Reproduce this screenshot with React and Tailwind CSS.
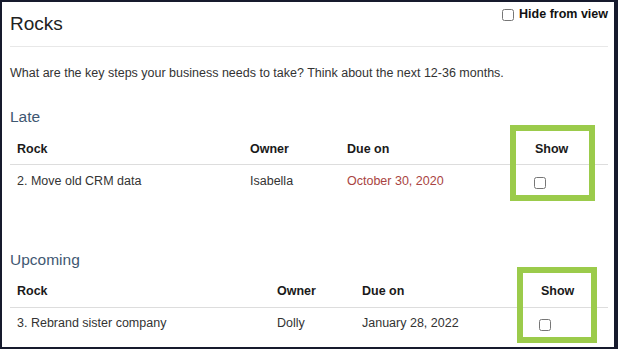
import React from "react";

const lateRocks = [
  { name: "2. Move old CRM data", owner: "Isabella", due: "October 30, 2020" },
];

const upcomingRocks = [
  { name: "3. Rebrand sister company", owner: "Dolly", due: "January 28, 2022" },
];

const App = () => {
  return (
    <div
      className="relative w-[618px] h-[349px] bg-white border-l-2 border-t-2 border-b-2 border-r-4 border-[#161a2d] text-[#333] overflow-hidden"
      style={{ fontFamily: '"Liberation Sans", Arial, sans-serif' }}
    >
      <div className="pl-[8px] pr-[6px]">
        {/* heading */}
        <div className="flex justify-between items-start pb-[11px] border-b border-[#e8e8e8]">
          <div className="mt-[11px] text-[19px] leading-[22px] text-[#222]">Rocks</div>
          <label className="mt-[5px] flex items-center gap-[5px] text-[12.5px] leading-[15px] font-bold text-[#111]">
            <input type="checkbox" className="w-[12px] h-[12px]" />
            Hide from view
          </label>
        </div>

        <div className="mt-[18px] text-[12.5px] leading-[16px]">
          What are the key steps your business needs to take? Think about the next 12-36 months.
        </div>

        {/* Late */}
        <div className="mt-[26px] text-[15.5px] leading-[20px] text-[#3f5872]">Late</div>
        <div className="grid grid-cols-[233px_97px_187px_81px] text-[12.5px] leading-[16px]">
          <div className="pl-[7px] pt-[14px] pb-[7px] font-bold text-[#1a1a1a] border-b border-[#dddddd]">Rock</div>
          <div className="pl-[7px] pt-[14px] pb-[7px] font-bold text-[#1a1a1a] border-b border-[#dddddd]">Owner</div>
          <div className="pl-[7px] pt-[14px] pb-[7px] font-bold text-[#1a1a1a] border-b border-[#dddddd]">Due on</div>
          <div className="pl-[8px] pt-[14px] pb-[7px] font-bold text-[#1a1a1a] border-b border-[#dddddd]">Show</div>
          {lateRocks.map((rock, index) => (
            <React.Fragment key={index}>
              <div className="pl-[7px] pt-[8px] pb-[8px]">{rock.name}</div>
              <div className="pl-[7px] pt-[8px] pb-[8px]">{rock.owner}</div>
              <div className="pl-[7px] pt-[8px] pb-[8px] text-[#a94442]">{rock.due}</div>
              <div className="pl-[7px] pt-[12px]">
                <input type="checkbox" className="block w-[12px] h-[12px]" />
              </div>
            </React.Fragment>
          ))}
        </div>

        {/* Upcoming */}
        <div className="mt-[53px] text-[15.5px] leading-[20px] text-[#3f5872]">Upcoming</div>
        <div className="grid grid-cols-[260px_85px_177px_76px] text-[12.5px] leading-[16px]">
          <div className="pl-[7px] pt-[13px] pb-[8px] font-bold text-[#1a1a1a] border-b border-[#dddddd]">Rock</div>
          <div className="pl-[7px] pt-[13px] pb-[8px] font-bold text-[#1a1a1a] border-b border-[#dddddd]">Owner</div>
          <div className="pl-[7px] pt-[13px] pb-[8px] font-bold text-[#1a1a1a] border-b border-[#dddddd]">Due on</div>
          <div className="pl-[9px] pt-[13px] pb-[8px] font-bold text-[#1a1a1a] border-b border-[#dddddd]">Show</div>
          {upcomingRocks.map((rock, index) => (
            <React.Fragment key={index}>
              <div className="pl-[7px] pt-[7px]">{rock.name}</div>
              <div className="pl-[7px] pt-[7px]">{rock.owner}</div>
              <div className="pl-[7px] pt-[7px]">{rock.due}</div>
              <div className="pl-[7px] pt-[11px]">
                <input type="checkbox" className="block w-[12px] h-[12px]" />
              </div>
            </React.Fragment>
          ))}
        </div>
      </div>

      {/* highlight boxes */}
      <div className="absolute left-[508px] top-[123px] w-[85px] h-[76px] border-[6px] border-[#9bcb4b]" />
      <div className="absolute left-[515px] top-[265px] w-[80px] h-[76px] border-[6px] border-[#9bcb4b]" />
    </div>
  );
};

export default App;
